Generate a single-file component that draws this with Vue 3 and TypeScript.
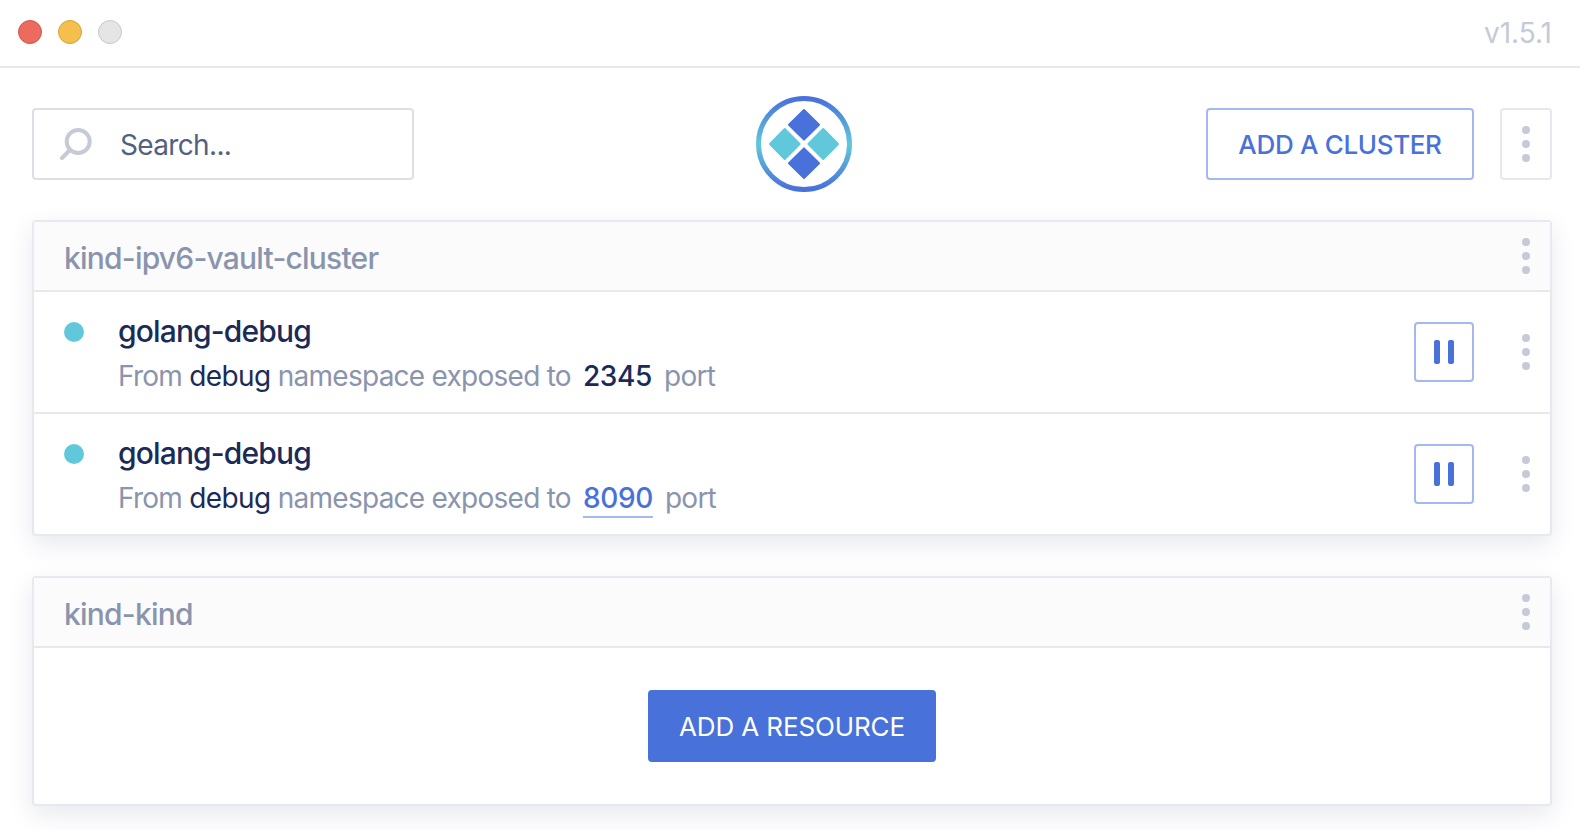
<script setup lang="ts">
interface Forward {
  id: number
  alias: string
  namespace: string
  port: number
  link: boolean
}

interface Cluster {
  name: string
  forwards: Forward[]
}

const lights: string[] = ['close', 'minimize', 'disabled']

const clusters: Cluster[] = [
  {
    name: 'kind-ipv6-vault-cluster',
    forwards: [
      { id: 1, alias: 'golang-debug', namespace: 'debug', port: 2345, link: false },
      { id: 2, alias: 'golang-debug', namespace: 'debug', port: 8090, link: true },
    ],
  },
  { name: 'kind-kind', forwards: [] },
]
</script>

<template>
  <div class="window">
    <header class="titlebar">
      <div class="lights">
        <span v-for="light in lights" :key="light" class="light" :class="light"></span>
      </div>
      <span class="version">v1.5.1</span>
    </header>

    <div class="toolbar">
      <label class="search">
        <svg class="search-icon" width="34" height="34" viewBox="0 0 34 34">
          <circle cx="20.2" cy="14.5" r="11.5" />
          <path d="M12 23L4 31" />
        </svg>
        <span class="placeholder">Search...</span>
      </label>
      <svg class="logo" width="96" height="96" viewBox="0 0 96 96">
        <defs>
          <linearGradient id="ring" x1="0" y1="0" x2="0" y2="1">
            <stop offset="0" stop-color="#4871da" />
            <stop offset="0.5" stop-color="#61c8dc" />
            <stop offset="1" stop-color="#4871da" />
          </linearGradient>
        </defs>
        <circle cx="48" cy="48" r="45.5" fill="none" stroke="url(#ring)" stroke-width="5" />
        <g stroke-width="2" stroke-linejoin="round">
          <path class="tile-blue" d="M48 14L63 28.7L48 43.6L33 28.7Z" />
          <path class="tile-blue" d="M48 52.4L63 67.3L48 82L33 67.3Z" />
          <path class="tile-cyan" d="M28.7 33L43.6 48L28.7 63L14 48Z" />
          <path class="tile-cyan" d="M67.3 33L82 48L67.3 63L52.4 48Z" />
        </g>
      </svg>
      <div class="actions">
        <button class="button outline">ADD A CLUSTER</button>
        <button class="menu framed"><i></i><i></i><i></i></button>
      </div>
    </div>

    <main class="clusters">
      <section v-for="cluster in clusters" :key="cluster.name" class="card">
        <div class="card-header">
          <h2 class="card-title">{{ cluster.name }}</h2>
          <button class="menu"><i></i><i></i><i></i></button>
        </div>
        <div v-for="item in cluster.forwards" :key="item.id" class="row">
          <span class="status"></span>
          <div class="info">
            <div class="alias">{{ item.alias }}</div>
            <div class="detail">
              <span>From <b class="namespace">{{ item.namespace }}</b> namespace exposed to</span>
              <b class="port" :class="{ link: item.link }">{{ item.port }}</b>
              <span>port</span>
            </div>
          </div>
          <button class="pause"><i></i><i></i></button>
          <button class="menu"><i></i><i></i><i></i></button>
        </div>
        <div v-if="!cluster.forwards.length" class="empty">
          <button class="button primary">ADD A RESOURCE</button>
        </div>
      </section>
    </main>
  </div>
</template>

<style>
body {
  margin: 0;
  background: #fff;
}
</style>

<style scoped>
* {
  box-sizing: border-box;
}

.window {
  width: 1580px;
  height: 830px;
  overflow: hidden;
  background: #fff;
  color: #1a2b57;
  font-family: Inter, 'Liberation Sans', sans-serif;
  font-size: 28px;
}

button {
  padding: 0;
  border: none;
  background: none;
  font-family: inherit;
  color: inherit;
}

.titlebar {
  display: flex;
  align-items: center;
  justify-content: space-between;
  height: 68px;
  padding: 0 28px 2px 18px;
  border-bottom: 2px solid #e8e9ef;
}

.lights {
  display: flex;
  gap: 16px;
}

.light {
  width: 24px;
  height: 24px;
  border: 1px solid;
  border-radius: 50%;
}

.close {
  background: #ed6a5e;
  border-color: #d35548;
}

.minimize {
  background: #f4bf4d;
  border-color: #d6a13c;
}

.disabled {
  background: #e5e5e5;
  border-color: #c8c8c8;
}

.version {
  padding-top: 2px;
  color: #c5cad7;
  letter-spacing: 0;
}

.toolbar {
  display: flex;
  align-items: center;
  height: 152px;
  padding: 0 28px 0 32px;
}

.search {
  display: flex;
  align-items: center;
  width: 382px;
  height: 72px;
  padding-left: 24px;
  border: 2px solid #dce0e5;
  border-radius: 4px;
}

.search-icon {
  fill: none;
  stroke: #c5cad7;
  stroke-width: 4;
  stroke-linecap: round;
}

.placeholder {
  padding-top: 1px;
  margin-left: 28px;
  color: #52617f;
  letter-spacing: -0.65px;
}

.logo {
  margin-left: 342px;
}

.tile-blue {
  fill: #4871da;
  stroke: #4871da;
}

.tile-cyan {
  fill: #61c8dc;
  stroke: #61c8dc;
}

.actions {
  display: flex;
  gap: 26px;
  margin-left: auto;
}

.button {
  height: 72px;
  border-radius: 4px;
  font-size: 26px;
  white-space: nowrap;
}

.outline {
  width: 268px;
  border: 2px solid #a4b8ee;
  color: #4871da;
  font-weight: 500;
  letter-spacing: -0.33px;
}

.primary {
  width: 288px;
  background: #4871da;
  color: #fff;
  letter-spacing: -0.12px;
}

.menu {
  display: flex;
  flex-direction: column;
  align-items: center;
  justify-content: center;
  gap: 6px;
  width: 52px;
  height: 72px;
}

.menu i {
  width: 8px;
  height: 8px;
  border-radius: 50%;
  background: #c5cad7;
}

.framed {
  border: 2px solid #e8e9ef;
  border-radius: 4px;
}

.clusters {
  display: flex;
  flex-direction: column;
  gap: 40px;
  padding: 0 28px 0 32px;
}

.card {
  border: 2px solid #e8e9ef;
  border-radius: 4px;
  background: #fff;
  box-shadow: 0 9px 26px rgba(26, 43, 87, 0.1);
}

.card-header {
  display: flex;
  align-items: center;
  justify-content: space-between;
  height: 70px;
  padding-left: 30px;
  border-bottom: 2px solid #e8e9ef;
  background: #fbfbfb;
}

.card-header .menu,
.row .menu {
  margin-right: -2px;
}

.card-title {
  margin: 0;
  padding-top: 3px;
  color: #8a94ad;
  font-size: 30px;
  font-weight: 500;
  letter-spacing: -0.78px;
}

.row {
  display: flex;
  align-items: center;
  height: 120px;
  padding-left: 30px;
}

.row + .row {
  height: 122px;
  border-top: 2px solid #e8e9ef;
}

.status {
  width: 20px;
  height: 20px;
  margin-top: -40px;
  border-radius: 50%;
  background: #61c8dc;
}

.info {
  flex: 1;
  padding: 5px 0 0 34px;
}

.alias {
  font-size: 30px;
  font-weight: 500;
  line-height: 44px;
  letter-spacing: -0.85px;
}

.detail {
  display: flex;
  color: #8a94ad;
  line-height: 47px;
  letter-spacing: -0.74px;
}

.namespace {
  color: #1a2b57;
  font-weight: 400;
  letter-spacing: -0.6px;
}

.port {
  height: 43px;
  margin: 0 12px;
  color: #1a2b57;
  font-weight: 500;
  letter-spacing: -0.35px;
}

.link {
  border-bottom: 2px solid #a4b8ee;
  color: #4871da;
}

.pause {
  display: flex;
  align-items: center;
  justify-content: center;
  gap: 8px;
  width: 60px;
  height: 60px;
  margin-right: 26px;
  border: 2px solid #a4b8ee;
  border-radius: 4px;
}

.pause i {
  width: 6px;
  height: 24px;
  border-radius: 2px;
  background: #4871da;
}

.empty {
  display: flex;
  align-items: center;
  justify-content: center;
  height: 156px;
}
</style>
